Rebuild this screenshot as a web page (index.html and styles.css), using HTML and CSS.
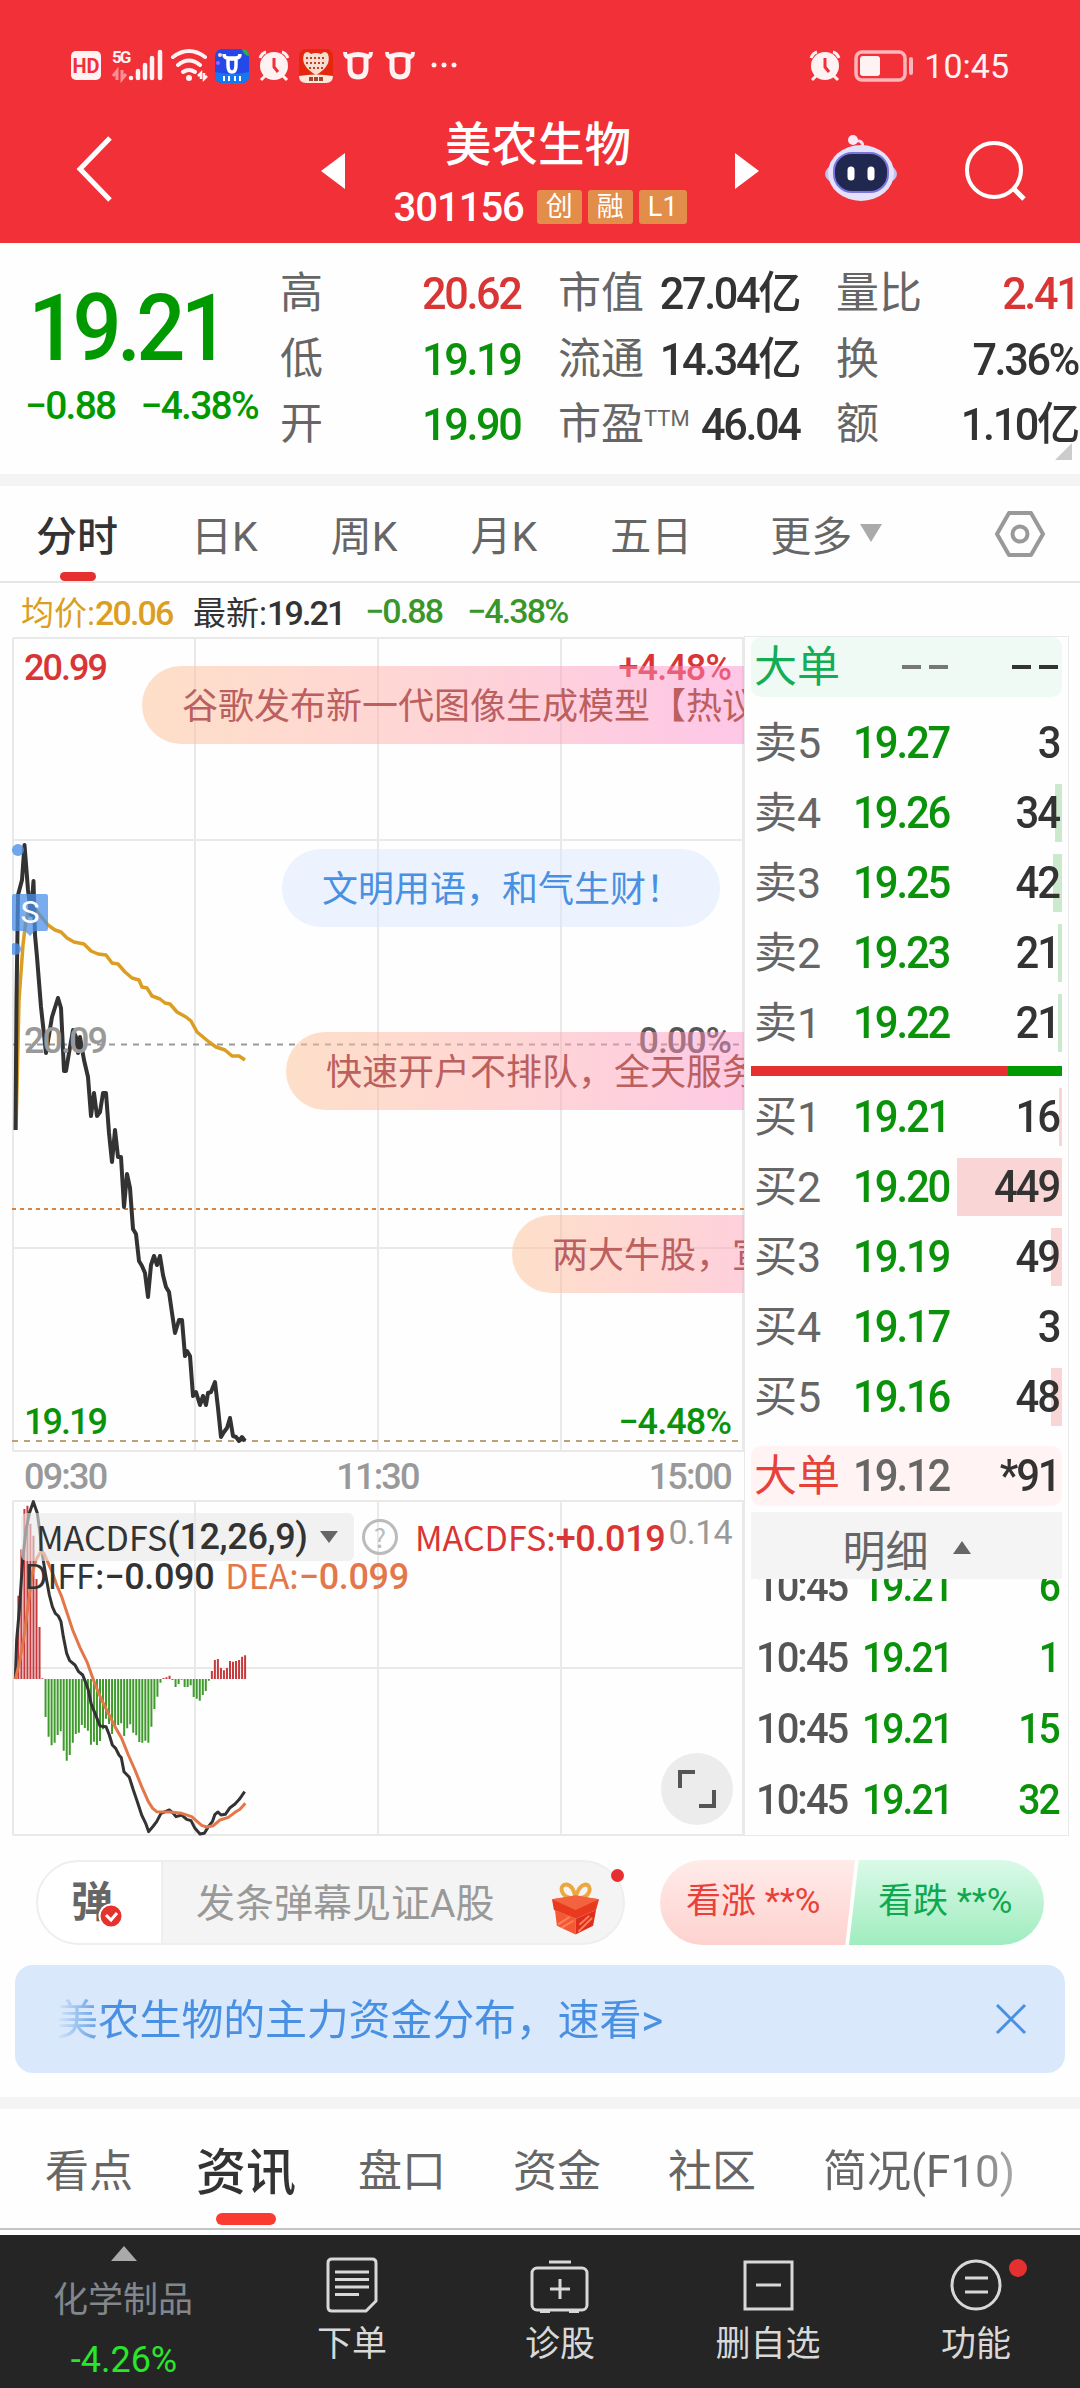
FILE: index.html
```html
<!DOCTYPE html>
<html lang="zh-CN">

<head>
    <meta charset="UTF-8">
    <meta name="viewport" content="width=device-width, initial-scale=1.0">
    <title>美农生物 301156</title>
    <link rel="stylesheet" href="styles.css">
</head>

<body>
    <div id="app">
        <!--顶部-->
        <header class="header">
            <div class="status-bar">
                <svg class="status-left" width="400" height="44" viewBox="64 44 400 44">
                    <rect x="71" y="51" width="30" height="29" rx="5" fill="#fff2f3" />
                    <text x="86" y="73" text-anchor="middle" class="hd">HD</text>
                    <text x="112" y="63" class="fiveg">5G</text>
                    <path d="M117 80V71l-4 5M122 70v9l4-5" fill="none" stroke="#f98f94" stroke-width="3" />
                    <path d="M131 78v0M138 78V71M145 78V65M152 78V58M160 78V52" stroke="#fff2f3" stroke-width="4.500" stroke-linecap="round" />
                    <g fill="none" stroke="#fff2f3" stroke-width="4" stroke-linecap="round">
                        <path d="M173 57q16-12 32 0M178 65q11-9 22 0M183 72q6-4 12 0" />
                    </g>
                    <circle cx="189" cy="78" r="3" fill="#fff2f3" />
                    <path d="M201 79v-6l-3 3M204 73v6l3-3" fill="none" stroke="#fff2f3" stroke-width="2.500" />
                    <rect x="215" y="49" width="34" height="34" rx="7" fill="#2449e8" />
                    <path d="M215 72q17 4 34 0v4q0 7-7 7h-20q-7 0-7-7z" fill="#1479f0" />
                    <path d="M242 49q7 0 7 7-5 0-7-7z" fill="#2fae48" />
                    <circle cx="220" cy="55" r="2" fill="#ffd9b0" />
                    <circle cx="218" cy="63" r="2" fill="#b05cf0" />
                    <path d="M224 54q0 4 4 4h8q4 0 4-4M228 59v6q0 7 4 7t4-7v-6z" fill="none" stroke="#fff" stroke-width="3.500" />
                    <path d="M224 76v5M229 76v5M235 76v5M240 76v5" stroke="#fff" stroke-width="2" />
                    <g id="clock">
                        <circle cx="274" cy="66" r="14" fill="#fff2f3" />
                        <path d="M260 58q2-5 6-6M288 58q-2-5-6-6M265 76l-4 4M283 76l4 4" fill="none" stroke="#fff2f3" stroke-width="3" />
                        <path d="M274 58v9l4 5" fill="none" stroke="#f13038" stroke-width="3" />
                    </g>
                    <rect x="299" y="49" width="34" height="34" rx="7" fill="#e5280d" />
                    <path d="M304 54q3-4 7 0 5-2 10 0 4-4 7 0 4 12-12 21-16-9-12-21z" fill="#f7ddd0" />
                    <path d="M306 58h20M306 63h20M309 68h14" stroke="#c0402a" stroke-width="2" stroke-dasharray="2 2" />
                    <path d="M299 76q17-3 34 0 0 7-7 7h-20q-7 0-7-7z" fill="#ffe8db" />
                    <path d="M309 79h14" stroke="#a5442d" stroke-width="4" stroke-dasharray="4 1" />
                    <g id="bull" fill="none" stroke="#fff2f3">
                        <path d="M345 52q0 6 7 6M371 52q0 6-7 6" stroke-width="4" />
                        <path d="M350 56q8-3 16 0v12q0 9-8 9t-8-9z" stroke-width="5" />
                    </g>
                    <use href="#bull" x="42" />
                    <g fill="#fff2f3">
                        <circle cx="434" cy="65" r="2.500" />
                        <circle cx="444" cy="65" r="2.500" />
                        <circle cx="454" cy="65" r="2.500" />
                    </g>
                </svg>
                <div class="status-right">
                    <svg width="108" height="40" viewBox="808 46 108 40">
                        <use href="#clock" x="552" />
                        <rect x="857" y="52" width="49" height="28" rx="6" fill="none" stroke="#fcb6b9" stroke-width="3.500" />
                        <rect x="861" y="56" width="20" height="20" rx="3" fill="#fff2f3" />
                        <path d="M912 59v14" stroke="#fcb6b9" stroke-width="4" stroke-linecap="round" />
                    </svg>
                    <span>10:45</span>
                </div>
            </div>
            <div class="nav">
                <svg class="back" width="40" height="68" viewBox="0 0 40 68">
                    <path d="M36 3L6 34l30 31" fill="none" stroke="#fff" stroke-width="5" />
                </svg>
                <svg class="prev" width="24" height="36" viewBox="0 0 24 36">
                    <path d="M24 0v36L0 18z" fill="#fff" />
                </svg>
                <div class="title">
                    <h1>美农生物</h1>
                    <div class="code"><b class="num">301156</b><i>创</i><i>融</i><i>L1</i></div>
                </div>
                <svg class="next" width="24" height="36" viewBox="0 0 24 36">
                    <path d="M0 0v36l24-18z" fill="#fff" />
                </svg>
                <svg class="robot" width="74" height="68" viewBox="824 134 74 68">
                    <path d="M863 147q0-7-7-6" fill="none" stroke="#f3dcf2" stroke-width="3" />
                    <circle cx="853" cy="140" r="5" fill="#fbe9f5" />
                    <ellipse cx="861" cy="174" rx="36" ry="15" fill="#bfc3ef" />
                    <ellipse cx="861" cy="173" rx="33" ry="28" fill="#e4e2fa" />
                    <rect x="834" y="153" width="54" height="39" rx="18" fill="#20284f" stroke="#7b74dc" stroke-width="2" />
                    <path d="M851 170v7M871 170v7" stroke="#fff" stroke-width="7" stroke-linecap="round" />
                </svg>
                <svg class="search" width="62" height="62" viewBox="964 140 62 62">
                    <circle cx="994" cy="170" r="27" fill="none" stroke="#fff" stroke-width="4" />
                    <path d="M1013 188l11 11" stroke="#fff" stroke-width="5" />
                </svg>
            </div>
        </header>

        <!--行情数据-->
        <section class="quote">
            <div class="price">
                <div class="now num">19.21</div>
                <div class="change num"><span>−0.88</span><span>−4.38%</span></div>
            </div>
            <dl class="col-1">
                <div><dt>高</dt><dd class="num red">20.62</dd></div>
                <div><dt>低</dt><dd class="num green">19.19</dd></div>
                <div><dt>开</dt><dd class="num green">19.90</dd></div>
            </dl>
            <dl class="col-2">
                <div><dt>市值</dt><dd class="num">27.04亿</dd></div>
                <div><dt>流通</dt><dd class="num">14.34亿</dd></div>
                <div><dt>市盈<sup>TTM</sup></dt><dd class="num">46.04</dd></div>
            </dl>
            <dl class="col-3">
                <div><dt>量比</dt><dd class="num red">2.41</dd></div>
                <div><dt>换</dt><dd class="num">7.36%</dd></div>
                <div><dt>额</dt><dd class="num">1.10亿</dd></div>
            </dl>
            <i class="corner"></i>
        </section>

        <!--周期切换-->
        <nav class="period">
            <a class="active">分时</a>
            <a>日K</a>
            <a>周K</a>
            <a>月K</a>
            <a>五日</a>
            <a class="more">更多<i class="down"></i></a>
            <svg width="50" height="48" viewBox="0 0 50 48">
                <path d="M14 3h22l12 21-12 21H14L2 24z" fill="none" stroke="#999" stroke-width="4" stroke-linejoin="round" />
                <circle cx="25" cy="24" r="7.500" fill="none" stroke="#999" stroke-width="4" />
            </svg>
        </nav>

        <div class="latest">
            <span class="avg">均价:<b class="num">20.06</b></span>
            <span class="last">最新:<b class="num">19.21</b></span>
            <span class="num diff">−0.88</span>
            <span class="num diff">−4.38%</span>
        </div>

        <section class="main">
            <div class="charts">
                <!--分时图-->
                <div class="time-chart">
                    <svg class="plot" width="732" height="816" viewBox="12 636 732 816">
                        <path d="M13 638H744M13 840H744M13 1248H744M13 1451H744M13 638V1451M195 638V1451M378 638V1451M561 638V1451M743 638V1451" stroke="#e9e9e9" stroke-width="2" />
                        <path d="M13 1044.500H740" stroke="#999" stroke-width="2" stroke-dasharray="6 6" />
                        <path d="M12 1209H744" stroke="#d6843f" stroke-width="2" stroke-dasharray="4 4" />
                        <path d="M12 1441H740" stroke="#bea277" stroke-width="2" stroke-dasharray="6 6" />
                        <polyline class="avg-line" points="16,1130 19,1000 23,945 26,920 31,903 38,913 48,925 55,930 61,932 67,938 74,942 84,944 91,951 98,954 106,955 112,963 118,964 125,972 132,978 139,980 142,987 147,988 152,996 160,999 165,1003 170,1004 177,1012 186,1017 191,1021 197,1032 203,1037 209,1042 216,1047 225,1050 232,1056 239,1056 245,1060" />
                        <polyline class="price-line" points="15.500,1130 16.500,1000 18,895 22,880 24.500,845 28,890 31,915 33.500,881 35,935 37,957 41,1007 46,1053 52,1017 58,998 61,1008 64,1071 66,1071 69,1053 73,1030 76,1037 78,1053 80,1037 84,1060 88,1077 91,1116 94,1093 97,1116 100,1112 103,1093 106,1093 109,1133 112,1162 115,1130 118,1157 121,1157 124,1207 127,1174 130,1188 133,1229 136,1234 139,1261 142,1266 145,1273 148,1297 151,1265 154,1256 157,1265 160,1256 163,1275 166,1287 169,1292 172,1313 175,1333 179,1320 182,1320 185,1356 187,1351 190,1356 193,1396 196,1392 200,1405 203,1396 206,1405 208,1393 211,1392 215,1382 218,1408 221,1437 224,1432 227,1428 230,1418 233,1436 236,1437 239,1441 242,1437 245,1441" />
                        <g fill="#4b90e8" fill-opacity=".8">
                            <circle cx="18" cy="850" r="6" />
                            <circle cx="15" cy="949" r="6" />
                            <path d="M14 894h32q2 0 2 2v33q0 2-2 2h-11l-5 5-5-5H14q-2 0-2-2v-33q0-2 2-2z" fill-opacity=".75" />
                        </g>
                        <text x="30" y="923" text-anchor="middle" class="sell">S</text>
                    </svg>
                    <span class="lab num top-left red">20.99</span>
                    <span class="lab num top-right red">+4.48%</span>
                    <span class="lab num mid-left">20.09</span>
                    <span class="lab num mid-right">0.00%</span>
                    <span class="lab num bottom-left green">19.19</span>
                    <span class="lab num bottom-right green">−4.48%</span>
                    <!--弹幕-->
                    <div class="danmu d1">谷歌发布新一代图像生成模型【热议】</div>
                    <div class="danmu d2">文明用语，和气生财！</div>
                    <div class="danmu d3">快速开户不排队，全天服务在线</div>
                    <div class="danmu d4">两大牛股，宣布重组</div>
                </div>
                <div class="time-axis num"><span>09:30</span><span>11:30</span><span>15:00</span></div>
                <!--MACD-->
                <div class="macd">
                    <svg class="plot" width="732" height="336" viewBox="36 60 2196 1008">
                        <path d="M39 63H2232M39 564H2232M39 1065H2232M39 63V1065M585 63V1065M1134 63V1065M1683 63V1065M2229 63V1065" stroke="#e9e9e9" stroke-width="6" />
                        <path id="bar-up" stroke="#c8393d" stroke-width="6" />
                        <path id="bar-down" stroke="#3f9a2c" stroke-width="6" />
                        <polyline class="diff-line" points="46,597 50,480 58,390 68,240 78,150 88,100 100,65 112,100 120,160 128,230 138,290 148,345 157,380 166,400 175,408 183,425 190,470 200,520 209,542 225,555 236,575 248,585 258,610 265,630 273,670 285,700 300,738 318,740 328,765 337,795 347,805 357,825 364,833 372,875 388,892 400,930 412,965 425,1005 437,1030 446,1055 460,1038 470,1025 483,1000 508,990 520,1000 528,1010 545,1005 560,1018 573,1022 585,1045 600,1062 613,1060 625,1040 637,1025 645,1003 654,996 663,1005 676,1003 690,983 705,972 718,958 734,935" />
                        <polyline class="dea-line" points="46,597 60,540 72,470 85,370 97,280 108,240 120,218 132,220 145,250 158,280 170,315 185,350 200,395 218,450 240,503 262,548 275,585 290,625 305,660 325,700 345,740 365,775 385,825 405,870 425,920 445,965 458,985 470,995 510,996 545,1000 575,1010 592,1025 605,1036 620,1041 640,1037 660,1020 685,1012 705,997 720,988 736,970" />
                    </svg>
                    <div class="macd-head">
                        <span class="select">MACDFS<b class="num">(12,26,9)</b><i class="down"></i></span>
                        <span class="help">?</span>
                        <span class="red">MACDFS:<b class="num">+0.019</b></span>
                    </div>
                    <div class="macd-sub"><span>DIFF:<b class="num">−0.090</b></span><span class="orange">DEA:<b class="num">−0.099</b></span></div>
                    <span class="macd-max">0.14</span>
                    <div class="expand">
                        <svg width="40" height="40" viewBox="0 0 40 40">
                            <path d="M3 19V3h15M37 21v16H22" fill="none" stroke="#555" stroke-width="4" />
                        </svg>
                    </div>
                </div>
            </div>

            <!--五档-->
            <div class="book">
                <div class="big sell-big"><span>大单</span><div class="dash"><i></i><i></i></div><div class="dash"><i></i><i></i></div></div>
                <ul class="asks">
                    <li><span>卖5</span><em>19.27</em><strong>3</strong></li>
                    <li><span>卖4</span><em>19.26</em><strong>34</strong><i style="width: 7px"></i></li>
                    <li><span>卖3</span><em>19.25</em><strong>42</strong><i style="width: 9px"></i></li>
                    <li><span>卖2</span><em>19.23</em><strong>21</strong><i style="width: 4px"></i></li>
                    <li><span>卖1</span><em>19.22</em><strong>21</strong><i style="width: 4px"></i></li>
                </ul>
                <div class="ratio"><i></i></div>
                <ul class="bids">
                    <li><span>买1</span><em>19.21</em><strong>16</strong><i style="width: 3px"></i></li>
                    <li><span>买2</span><em>19.20</em><strong>449</strong><i style="width: 105px"></i></li>
                    <li><span>买3</span><em>19.19</em><strong>49</strong><i style="width: 11px"></i></li>
                    <li><span>买4</span><em>19.17</em><strong>3</strong></li>
                    <li><span>买5</span><em>19.16</em><strong>48</strong><i style="width: 11px"></i></li>
                </ul>
                <div class="big buy-big"><span>大单</span><em>19.12</em><strong>*91</strong></div>
                <div class="detail-head">明细<i class="up"></i></div>
                <ul class="ticks">
                    <li><span>10:45</span><em>19.21</em><strong>6</strong></li>
                    <li><span>10:45</span><em>19.21</em><strong>1</strong></li>
                    <li><span>10:45</span><em>19.21</em><strong>15</strong></li>
                    <li><span>10:45</span><em>19.21</em><strong>32</strong></li>
                </ul>
            </div>
        </section>

        <!--发弹幕 + 看涨看跌-->
        <section class="actions">
            <div class="send">
                <div class="toggle">弹
                    <svg width="26" height="26" viewBox="0 0 26 26">
                        <circle cx="13" cy="13" r="11.500" fill="#e5322d" stroke="#fff" stroke-width="2" />
                        <path d="M8 12l5 5 6-7" fill="none" stroke="#fff" stroke-width="3" />
                    </svg>
                </div>
                <div class="input">发条弹幕见证A股</div>
                <svg class="gift" width="49" height="54" viewBox="0 0 50 54">
                    <path d="M24 16C8 16 8 1 16 2q7 1 9 14Q28 3 35 2c7 0 7 14-9 14" fill="none" stroke="#eea63e" stroke-width="4" />
                    <path d="M1 17l24-3 24 3-3 11L25 37 3 28z" fill="#e93a20" />
                    <path d="M1 17l24 11 24-11-24-4z" fill="#f4633f" />
                    <path d="M4 28l21 9v16L6 44z" fill="#f45936" />
                    <path d="M46 28l-21 9v16l18-9z" fill="#dd2f1b" />
                    <path d="M7 43l12-8M11 46l12-7M28 50l14-14M29 43l10-9" stroke="#ff8058" stroke-width="2" />
                </svg>
                <i class="dot"></i>
            </div>
            <div class="vote">
                <div class="bull">看涨 **%</div>
                <div class="bear">看跌 **%</div>
            </div>
        </section>

        <div class="banner">
            <p>美农生物的主力资金分布，速看&gt;</p>
            <svg width="32" height="32" viewBox="0 0 32 32">
                <path d="M2 2l28 28M30 2L2 30" stroke="#4a90e2" stroke-width="3" />
            </svg>
        </div>

        <!--资讯切换-->
        <nav class="info-tabs">
            <a>看点</a>
            <a class="active">资讯</a>
            <a>盘口</a>
            <a>资金</a>
            <a>社区</a>
            <a class="fade">简况(F10)</a>
        </nav>

        <!--底部菜单-->
        <footer class="footer">
            <div class="sector"><i class="up"></i><span>化学制品</span><em>-4.26%</em></div>
            <div class="item">
                <svg width="60" height="56" viewBox="0 0 60 56">
                    <path d="M10 2h40q4 0 4 4v38L44 54H10q-4 0-4-4V6q0-4 4-4z" />
                    <path d="M13 15h34M13 22.500h34M13 30h34M13 37.500h24" />
                </svg>
                <span>下单</span>
            </div>
            <div class="item">
                <svg width="60" height="56" viewBox="0 0 60 56">
                    <rect x="2" y="11" width="55" height="42" rx="5" />
                    <path d="M19 5h22M10 55h10M39 55h10M30 22v20M20 32h20" />
                </svg>
                <span>诊股</span>
            </div>
            <div class="item">
                <svg width="60" height="56" viewBox="0 0 60 56">
                    <rect x="7" y="5" width="47" height="47" />
                    <path d="M18 28h25" />
                </svg>
                <span>删自选</span>
            </div>
            <div class="item">
                <svg width="60" height="56" viewBox="0 0 60 56">
                    <circle cx="30" cy="28" r="24" />
                    <path d="M19 21h23M19 35h23" />
                </svg>
                <span>功能</span>
                <i class="dot"></i>
            </div>
        </footer>
    </div>

    <script>
        //MACD柱，正数朝上，负数朝下
        const bars = [0, 250, 389, 510, 520, 466, 430, 300, 156, 2,
            -114, -173, -199, -191, -168, -157, -215, -245, -228, -191, -165, -161, -138, -147, -155,
            -197, -188, -198, -186, -151, -119, -135, -165, -145, -138, -133, -171, -148, -136, -161,
            -169, -189, -191, -185, -191, -143, -90, -53, -11, 3, 5, 10, -3, -24, -15, -2, -24, -24,
            -19, -54, -59, -65, -48, -36, -5, 24, 57, 60, 33, 26, 33, 54, 52, 54, 57, 67, 71];
        const zero = 597;
        let up = "";
        let down = "";
        bars.forEach((v, i) => {
            const line = "M" + (46 + i * 9.07).toFixed(1) + " " + zero + "v" + -v;
            if (v > 0) {
                up += line;
            } else {
                down += line;
            }
        });
        document.querySelector("#bar-up").setAttribute("d", up);
        document.querySelector("#bar-down").setAttribute("d", down);
    </script>
</body>

</html>
```
FILE: styles.css
```css
* {
    margin: 0;
    padding: 0;
    box-sizing: border-box;
}

body {
    width: 1080px;
    background-color: #fefefe;
    color: #333;
    font-family: Roboto, "Noto Sans CJK SC", sans-serif;
}

ul {
    list-style: none;
}

i,
em {
    font-style: normal;
}

svg {
    display: block;
    flex-shrink: 0;
}

#app {
    width: 1080px;
    height: 2388px;
    overflow: hidden;
}

/*数字*/
.num {
    font-weight: 500;
    letter-spacing: -0.055em;
}

.red {
    color: #d93535;
}

.green {
    color: #0a930a;
}

.orange {
    color: #e4774a;
}

/*顶部*/
.header {
    height: 243px;
    background-color: #f13038;
    color: #fff;
}

.status-bar {
    display: flex;
    justify-content: space-between;
    align-items: center;
    height: 88px;
    padding: 44px 71px 0 64px;
}

.status-right {
    display: flex;
    align-items: center;
    gap: 9px;
    font-size: 34px;
    line-height: 40px;
    color: #fff2f3;
}

.hd {
    font-size: 20px;
    font-weight: 700;
    fill: #f13038;
}

.fiveg {
    font-size: 17px;
    font-weight: 700;
    letter-spacing: -2px;
    fill: #fff2f3;
}

.nav {
    display: flex;
    height: 155px;
    padding-left: 74px;
}

.nav .back {
    margin-top: 47px;
}

.nav .prev {
    margin: 65px 0 0 207px;
}

.title {
    width: 390px;
    text-align: center;
}

.title h1 {
    margin-top: 23px;
    padding-right: 4px;
    font-size: 46.5px;
    font-weight: 500;
    line-height: 68px;
}

.code {
    display: flex;
    align-items: center;
    justify-content: center;
    gap: 6px;
    height: 42px;
    margin-top: 7px;
}

.code b {
    margin-right: 7px;
    font-size: 40px;
    letter-spacing: -0.025em;
}

.code i {
    height: 34px;
    padding: 0 9px;
    border-radius: 3px;
    background-color: #e38d4b;
    font-size: 27px;
    line-height: 34px;
}

.nav .next {
    margin-top: 65px;
}

.nav .robot {
    margin: 46px 0 0 65px;
}

.nav .search {
    margin: 52px 0 0 66px;
}

/*行情数据*/
.quote {
    display: flex;
    position: relative;
    height: 243px;
    padding-top: 18px;
    border-bottom: 12px solid #f4f4f4;
}

.price {
    width: 280px;
    color: #009900;
}

.price .now {
    padding: 14px 0 0 30px;
    font-size: 92px;
    line-height: 108px;
    transform: scaleX(.94);
    transform-origin: 0 0;
}

.price .change {
    display: flex;
    gap: 25px;
    padding-left: 25px;
    font-size: 39px;
    line-height: 46px;
    letter-spacing: -0.045em;
}

.quote dl div {
    display: flex;
    justify-content: space-between;
    height: 65.5px;
    font-size: 45px;
    line-height: 65.5px;
    white-space: nowrap;
}

.quote dt {
    color: #666;
    font-size: 43px;
}

.quote dd {
    transform: scaleX(.96);
    transform-origin: 100% 0;
}

.quote sup {
    position: relative;
    top: -13px;
    font-size: 22px;
    line-height: 0;
    vertical-align: baseline;
}

.col-1 {
    width: 240px;
}

.col-2 {
    width: 241px;
    margin-left: 38px;
}

.col-3 {
    width: 242px;
    margin-left: 37px;
}

.corner {
    position: absolute;
    right: 8px;
    bottom: 14px;
    border-left: 17px solid transparent;
    border-bottom: 17px solid #ccc;
}

/*周期切换*/
.period {
    display: flex;
    align-items: center;
    height: 97px;
    padding: 0 35px 0 36px;
    border-bottom: 2px solid #e5e5e5;
    font-size: 41px;
    color: #666;
}

.period a {
    display: flex;
    align-items: center;
    position: relative;
    height: 95px;
    margin-right: 73px;
    padding-bottom: 2px;
}

.period .more {
    margin-left: 5px;
}

.period a.active {
    font-weight: 500;
    color: #333;
}

.period a.active::after {
    content: "";
    position: absolute;
    bottom: 0;
    left: 24px;
    width: 36px;
    height: 9px;
    border-radius: 5px;
    background-color: #e53030;
}

.period svg {
    margin-left: auto;
}

.down {
    margin-left: 8px;
    border: 11px solid transparent;
    border-top: 18px solid #aaa;
    border-bottom: 0;
}

.up {
    border: 9px solid transparent;
    border-bottom: 13px solid #666;
    border-top: 0;
}

.latest {
    display: flex;
    align-items: center;
    height: 53px;
    padding: 2px 0 0 21px;
    font-size: 33px;
}

.latest .num {
    font-size: 34px;
}

.latest .avg {
    width: 172px;
    color: #dc9e22;
}

.latest .last {
    width: 172px;
}

.latest .diff {
    width: 102px;
    color: #39962b;
}

/*图表*/
.main {
    display: flex;
    height: 1200px;
    padding-left: 12px;
}

.charts {
    width: 732px;
}

.time-chart {
    position: relative;
    height: 816px;
    overflow: hidden;
}

.avg-line,
.price-line,
.diff-line,
.dea-line {
    fill: none;
    stroke: #dc9e22;
    stroke-width: 3.5;
    stroke-linejoin: round;
}

.price-line {
    stroke: #333;
    stroke-width: 4;
}

.diff-line {
    stroke: #333;
    stroke-width: 9;
}

.dea-line {
    stroke: #e4774a;
    stroke-width: 9;
}

.sell {
    font-size: 32px;
    fill: #fff;
}

.lab {
    position: absolute;
    font-size: 36px;
    line-height: 42px;
}

.top-left {
    top: 11px;
    left: 12px;
}

.top-right {
    top: 11px;
    right: 13px;
    letter-spacing: -0.025em;
}

.mid-left {
    top: 384px;
    left: 12px;
    color: #999;
}

.mid-right {
    top: 384px;
    right: 13px;
    color: #555;
    letter-spacing: -0.03em;
}

.bottom-left {
    top: 765px;
    left: 12px;
}

.bottom-right {
    top: 765px;
    right: 13px;
    letter-spacing: -0.025em;
}

.danmu {
    position: absolute;
    height: 78px;
    padding: 2px 40px 0;
    border-radius: 39px;
    background: linear-gradient(to right, rgba(253, 192, 148, .5), rgba(255, 173, 173, .5) 40%, rgba(255, 130, 205, .45) 90%);
    color: #bc5f5f;
    font-size: 36px;
    line-height: 78px;
    white-space: nowrap;
}

.d1 {
    top: 30px;
    left: 130px;
}

.d2 {
    top: 213px;
    left: 270px;
    width: 438px;
    background: rgba(218, 232, 253, .5);
    color: #4a90e2;
}

.d3 {
    top: 396px;
    left: 274px;
}

.d4 {
    top: 579px;
    left: 500px;
}

.time-axis {
    display: flex;
    justify-content: space-between;
    height: 48px;
    padding: 0 13px 0 12px;
    color: #999;
    font-size: 36px;
    line-height: 50px;
    letter-spacing: -0.05em;
}

.macd {
    position: relative;
    height: 336px;
}

.macd .plot {
    position: absolute;
    top: 0;
    left: 0;
}

.macd-head,
.macd-sub {
    display: flex;
    align-items: center;
    position: relative;
    font-family: "Noto Sans CJK SC", sans-serif;
    font-size: 34px;
    white-space: nowrap;
}

.macd-head {
    padding: 12px 0 0 9px;
}

.macd-head .num,
.macd-sub .num {
    font-family: Roboto, sans-serif;
    font-size: 36px;
    letter-spacing: -0.01em;
}

.select {
    display: flex;
    align-items: center;
    width: 333px;
    height: 48px;
    padding-left: 15px;
    border-radius: 6px;
    background-color: rgba(232, 232, 232, .6);
}

.select .down {
    margin-left: 12px;
    border-width: 9px;
    border-top: 12px solid #666;
    border-bottom: 0;
}

.help {
    width: 36px;
    height: 36px;
    margin: 0 17px 0 8px;
    border: 3px solid #bbb;
    border-radius: 50%;
    color: #bbb;
    font-size: 26px;
    line-height: 29px;
    text-align: center;
}

.macd-sub {
    gap: 11px;
    height: 26px;
    padding-left: 12px;
}

.macd-max {
    position: absolute;
    top: 12px;
    right: 12px;
    color: #999;
    font-size: 34px;
    letter-spacing: -0.02em;
}

.expand {
    display: flex;
    align-items: center;
    justify-content: center;
    position: absolute;
    right: 11px;
    bottom: 11px;
    width: 72px;
    height: 72px;
    border-radius: 50%;
    background-color: #ececec;
}

/*五档*/
.book {
    width: 325px;
    padding: 0 6px;
    border: 1px solid #e9e9e9;
    overflow: hidden;
}

.book li,
.big {
    display: flex;
    align-items: center;
    position: relative;
    height: 58px;
    margin-bottom: 12px;
    padding-left: 3px;
    font-size: 43px;
    line-height: 58px;
}

.book span {
    width: 99px;
    color: #666;
    white-space: nowrap;
}

.book em,
.book strong {
    font-size: 45px;
    font-weight: 500;
    letter-spacing: -0.05em;
    transform: scaleX(.93);
    transform-origin: 0 0;
}

.book em {
    color: #0a930a;
}

.book strong {
    margin-left: auto;
    padding-right: 3px;
    transform-origin: 100% 0;
    z-index: 1;
}

.asks {
    padding-top: 18px;
}

.asks i,
.bids i {
    position: absolute;
    right: 0;
    height: 58px;
    background-color: #cbe9cc;
}

.bids i {
    background-color: #f9d5d5;
}

.book .big {
    height: 60px;
    margin: 0 0 -1px;
    border-radius: 10px;
    background-color: #f0faf5;
}

.book .sell-big span {
    color: #12ad55;
}

.book .buy-big {
    margin-top: 20px;
    background-color: #fff3f3;
}

.book .buy-big span {
    color: #e8413a;
}

.book .buy-big em {
    color: #666;
}

.dash {
    display: flex;
    gap: 8px;
    margin-left: auto;
    padding-right: 4px;
}

.dash i {
    width: 19px;
    height: 4px;
    background-color: #333;
}

span + .dash {
    margin-left: 49px;
    padding-right: 0;
}

span + .dash i {
    background-color: #777;
}

.ratio {
    height: 10px;
    margin: 14px 0 12px;
    background-color: #009900;
}

.ratio i {
    display: block;
    width: 257px;
    height: 10px;
    background-color: #e53030;
}

.detail-head {
    display: flex;
    align-items: center;
    justify-content: center;
    gap: 24px;
    position: relative;
    height: 67px;
    margin-top: 7px;
    padding-top: 4px;
    background-color: #f4f4f4;
    color: #666;
    font-size: 43px;
    z-index: 2;
}

.ticks {
    margin-top: -28px;
}

.book .ticks li {
    height: 71px;
    margin: 0;
    padding-left: 5px;
    font-size: 42px;
}

.book .ticks span {
    width: 106px;
    color: #555;
    font-weight: 500;
    letter-spacing: -0.05em;
    transform: scaleX(.95);
    transform-origin: 0 0;
}

.book .ticks em,
.book .ticks strong {
    color: #0a930a;
    font-size: 42px;
}

/*发弹幕*/
.actions {
    display: flex;
    justify-content: space-between;
    height: 129px;
    padding: 24px 36px 0;
}

.send {
    display: flex;
    align-items: center;
    position: relative;
    width: 589px;
    height: 85px;
    border: 2px solid #eee;
    border-radius: 43px;
    background: linear-gradient(to right, #fff 123px, #eee 123px, #eee 125px, #f4f4f4 125px);
}

.toggle {
    position: relative;
    width: 124px;
    padding-left: 33px;
    color: #666;
    font-size: 42px;
    font-weight: 700;
    line-height: 76px;
}

.toggle svg {
    position: absolute;
    top: 38px;
    left: 60px;
}

.input {
    width: 350px;
    padding: 0 0 5px 34px;
    color: #999;
    font-size: 39px;
    white-space: nowrap;
}

.gift {
    margin: 12px 0 0 39px;
}

.dot {
    position: absolute;
    top: 7px;
    right: -1px;
    width: 13px;
    height: 13px;
    border-radius: 50%;
    background-color: #e53030;
}

.vote {
    display: flex;
    width: 384px;
    height: 85px;
    border-radius: 43px;
    overflow: hidden;
    font-size: 35px;
    line-height: 83px;
}

.vote div {
    width: 195px;
    clip-path: polygon(0 0, 100% 0, 95% 100%, 0 100%);
    background: linear-gradient(#ffebe9, #fdd2cf);
    color: #e8413a;
    padding-left: 26px;
    white-space: nowrap;
}

.vote .bear {
    width: 195px;
    margin-left: -6px;
    padding-left: 29px;
    flex-shrink: 0;
    clip-path: polygon(5% 0, 100% 0, 100% 100%, 0 100%);
    background: linear-gradient(#dafae8, #a0ecbf);
    color: #0fa850;
}

.banner {
    display: flex;
    align-items: center;
    justify-content: space-between;
    height: 108px;
    margin: 0 15px 24px;
    padding: 0 38px 0 41px;
    border-radius: 18px;
    background-color: #d9e8fb;
    color: #4a90e2;
    font-size: 42px;
}

.banner p {
    margin-bottom: 5px;
    letter-spacing: -0.2px;
    -webkit-mask-image: linear-gradient(to right, transparent, #000 50px);
    mask-image: linear-gradient(to right, transparent, #000 50px);
}

/*资讯切换*/
.info-tabs {
    display: flex;
    align-items: center;
    gap: 67px;
    height: 138px;
    padding: 0 0 9px 45px;
    border-top: 12px solid #f4f4f4;
    box-shadow: inset 0 -5px #fefefe, inset 0 -7px #c4c4c4;
    color: #666;
    font-size: 44px;
}

.info-tabs a {
    position: relative;
}

.info-tabs .active {
    margin: 0 -5px 0 -4px;
    color: #333;
    font-size: 50px;
    font-weight: 500;
}

.info-tabs .active::after {
    content: "";
    position: absolute;
    bottom: -21px;
    left: 20px;
    width: 60px;
    height: 12px;
    border-radius: 6px;
    background-color: #fb3a30;
}

.info-tabs .fade {
    background: linear-gradient(to right, #666 70%, #aaa);
    -webkit-background-clip: text;
    background-clip: text;
    color: transparent;
}

/*底部菜单*/
.footer {
    display: flex;
    height: 153px;
    background-color: #252525;
    color: #d8d8d8;
    font-size: 35px;
}

.sector {
    display: flex;
    flex-direction: column;
    align-items: center;
    width: 248px;
    padding-top: 11px;
    color: #81878c;
}

.sector .up {
    border-width: 13px;
    border-bottom: 15px solid #aaa;
    border-top: 0;
}

.sector span {
    margin: 14px 2px 0 0;
    line-height: 52px;
}

.sector em {
    margin-top: 9px;
    color: #29e62b;
    font-size: 36px;
    line-height: 48px;
}

.item {
    display: flex;
    flex-direction: column;
    align-items: center;
    position: relative;
    width: 208px;
    padding-top: 22px;
}

.item svg {
    fill: none;
    stroke: #d8d8d8;
    stroke-width: 3;
}

.item span {
    margin-top: 6px;
    line-height: 52px;
}

.item .dot {
    top: 24px;
    right: 53px;
    width: 18px;
    height: 18px;
}
```
